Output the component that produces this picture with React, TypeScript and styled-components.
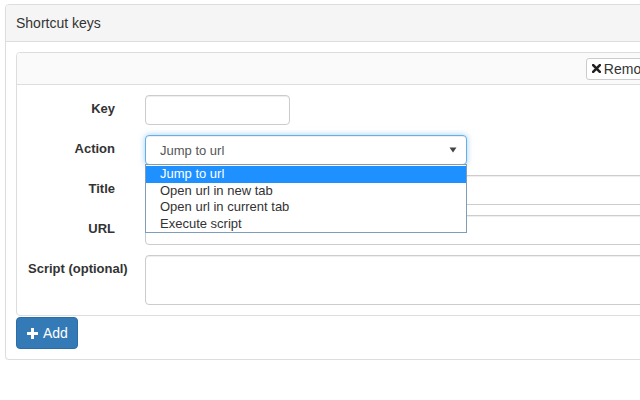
import React from 'react';
import styled, { createGlobalStyle } from 'styled-components';

const GlobalStyle = createGlobalStyle`
  html, body {
    margin: 0;
    padding: 0;
    background: #fff;
    overflow: hidden;
  }
  body {
    font-family: "Liberation Sans", Arial, sans-serif;
    font-size: 13px;
    color: #333;
  }
`;

const Page = styled.div`
  padding: 4px 0 0 5px;
`;

const Panel = styled.div<{ $width?: number; $inner?: boolean }>`
  width: ${(p) => (p.$width ? `${p.$width}px` : 'auto')};
  border: 1px solid #ddd;
  border-radius: 4px;
  background: #fff;
  box-shadow: ${(p) => (p.$inner ? 'none' : '0 1px 1px rgba(0, 0, 0, 0.05)')};
`;

const PanelHeading = styled.div`
  height: 36px;
  padding: 0 10px;
  display: flex;
  align-items: center;
  background: #f5f5f5;
  border-bottom: 1px solid #ddd;
  border-radius: 3px 3px 0 0;
  font-size: 14px;
  color: #333;
`;

const PanelBody = styled.div`
  padding: 10px;
  display: flex;
  flex-direction: column;
  align-items: flex-start;
  gap: 1px;
`;

const ItemHeading = styled.div`
  height: 31px;
  padding: 0 5px;
  display: flex;
  align-items: center;
  justify-content: flex-end;
  background: #fafafa;
  border-bottom: 1px solid #ddd;
  border-radius: 3px 3px 0 0;
`;

const SmallButton = styled.button`
  height: 22px;
  padding: 0 5px;
  display: flex;
  align-items: center;
  gap: 3px;
  background: #fff;
  border: 1px solid #ccc;
  border-radius: 3px;
  font-family: "Liberation Sans", Arial, sans-serif;
  font-size: 14px;
  color: #333;
`;

const PrimaryButton = styled.button`
  height: 32px;
  padding: 0 9px 0 10px;
  display: flex;
  align-items: center;
  gap: 5px;
  background: #337ab7;
  border: 1px solid #2e6da4;
  border-radius: 4px;
  font-family: "Liberation Sans", Arial, sans-serif;
  font-size: 14px;
  color: #fff;
`;

const Form = styled.div`
  padding: 10px 0;
  display: grid;
  grid-template-columns: 113px 1fr;
  row-gap: 10px;
`;

const Label = styled.div`
  padding: 6px 15px 0 11px;
  text-align: right;
  white-space: nowrap;
  font-weight: bold;
  font-size: 13px;
  line-height: 16px;
  color: #333;
`;

const Control = styled.div`
  padding: 0 15px;
  position: relative;
`;

const Input = styled.div<{ $width?: number; $tall?: boolean }>`
  box-sizing: border-box;
  width: ${(p) => (p.$width ? `${p.$width}px` : '100%')};
  height: ${(p) => (p.$tall ? '50px' : '30px')};
  border: 1px solid #ccc;
  border-radius: 4px;
  background: #fff;
  box-shadow: inset 0 1px 1px rgba(0, 0, 0, 0.075);
`;

const SelectBox = styled.div`
  box-sizing: border-box;
  width: 322px;
  height: 30px;
  padding: 0 9px 0 14px;
  display: flex;
  align-items: center;
  justify-content: space-between;
  border: 1px solid #66afe9;
  border-radius: 4px;
  background: #fff;
  box-shadow: inset 0 1px 1px rgba(0, 0, 0, 0.075), 0 0 6px rgba(102, 175, 233, 0.6);
  font-size: 13px;
  color: #555;
`;

const OptionList = styled.div`
  position: absolute;
  top: 29px;
  left: 15px;
  z-index: 2;
  box-sizing: border-box;
  width: 322px;
  padding: 1px 0 0;
  background: #fff;
  border: 1px solid #7f9db9;
`;

const Option = styled.div<{ $active?: boolean }>`
  height: 16.5px;
  padding-left: 14px;
  line-height: 16.5px;
  font-size: 13px;
  background: ${(p) => (p.$active ? '#1e90ff' : '#fff')};
  color: ${(p) => (p.$active ? '#fff' : '#333')};
`;

const RemoveIcon = () => (
  <svg width="9" height="9" viewBox="0 0 9 9">
    <path d="M1.2 1.2 L7.8 7.8 M7.8 1.2 L1.2 7.8" stroke="#222" strokeWidth="2.6" strokeLinecap="square" />
  </svg>
);

const PlusIcon = () => (
  <svg width="11" height="11" viewBox="0 0 11 11">
    <path d="M4 0 H7 V4 H11 V7 H7 V11 H4 V7 H0 V4 H4 Z" fill="#fff" />
  </svg>
);

const Caret = () => (
  <svg width="8" height="6" viewBox="0 0 8 6">
    <path d="M0.5 0.5 H7.5 L4 5.5 Z" fill="#444" />
  </svg>
);

const options = ['Jump to url', 'Open url in new tab', 'Open url in current tab', 'Execute script'];

export default function App() {
  return (
    <Page>
      <GlobalStyle />
      <Panel $width={672}>
        <PanelHeading>Shortcut keys</PanelHeading>
        <PanelBody>
          <Panel $inner style={{ alignSelf: 'stretch' }}>
            <ItemHeading>
              <SmallButton>
                <RemoveIcon />
                Remove
              </SmallButton>
            </ItemHeading>
            <Form>
              <Label>Key</Label>
              <Control>
                <Input $width={145} />
              </Control>

              <Label>Action</Label>
              <Control>
                <SelectBox>
                  <span>Jump to url</span>
                  <Caret />
                </SelectBox>
                <OptionList>
                  {options.map((o, i) => (
                    <Option key={o} $active={i === 0}>
                      {o}
                    </Option>
                  ))}
                </OptionList>
              </Control>

              <Label>Title</Label>
              <Control>
                <Input />
              </Control>

              <Label>URL</Label>
              <Control>
                <Input />
              </Control>

              <Label>Script (optional)</Label>
              <Control>
                <Input $tall />
              </Control>
            </Form>
          </Panel>
          <PrimaryButton>
            <PlusIcon />
            Add
          </PrimaryButton>
        </PanelBody>
      </Panel>
    </Page>
  );
}
